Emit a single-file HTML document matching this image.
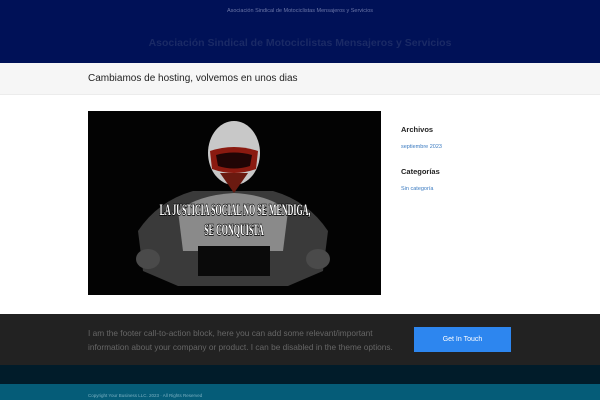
<!DOCTYPE html>
<html><head><meta charset="utf-8"><style>
*{margin:0;padding:0;box-sizing:border-box}
body{width:600px;height:400px;overflow:hidden;font-family:"Liberation Sans",sans-serif;background:#fff;position:relative}
.hdr{position:absolute;top:0;left:0;width:600px;height:63px;background:#001157}
.tag{position:absolute;top:8px;width:100%;text-align:center;font-size:5.5px;color:#6a76a8}
.site{position:absolute;top:37px;width:100%;text-align:center;font-size:10.5px;font-weight:bold;color:#1a2a66}
.tb{position:absolute;top:63px;left:0;width:600px;height:32px;background:#f6f6f6;border-bottom:1px solid #ececec}
.tb h1{position:absolute;left:88px;top:10px;font-size:10px;font-weight:normal;color:#222}
.img{position:absolute;left:88px;top:111px;width:293px;height:184px;background:#000}
.side{position:absolute;left:401px;top:125px}
.side h3{font-size:7.5px;color:#222;font-weight:bold;height:19px}
.side a{display:block;font-size:5.5px;color:#3a7ac0;height:23px}
.cta{position:absolute;top:314px;left:0;width:600px;height:51px;background:#222}
.cta p{position:absolute;left:88px;top:12px;width:312px;font-size:8.3px;line-height:14px;color:#666;white-space:nowrap}
.btn{position:absolute;left:414px;top:13px;width:97px;height:25px;background:#2d86ef;color:#fff;font-size:7px;text-align:center;line-height:25px}
.dk{position:absolute;top:365px;left:0;width:600px;height:19px;background:#011c2a}
.bt{position:absolute;top:384px;left:0;width:600px;height:16px;background:#055c78}
.bt span{position:absolute;left:88px;top:9px;font-size:4.5px;color:#7ab0c2}
</style></head><body>
<div class="hdr"><div class="tag">Asociación Sindical de Motociclistas Mensajeros y Servicios</div><div class="site">Asociación Sindical de Motociclistas Mensajeros y Servicios</div></div>
<div class="tb"><h1>Cambiamos de hosting, volvemos en unos dias</h1></div>
<div class="img"><svg width="293" height="184" viewBox="0 0 293 184">
<rect width="293" height="184" fill="#030303"/>
<path d="M50 120 Q70 90 105 80 L185 80 Q220 90 240 120 L235 160 L200 175 L90 175 L55 160Z" fill="#3a3a3a"/>
<path d="M90 100 Q110 84 146 82 Q182 84 200 100 L195 140 L95 140Z" fill="#8a8a8a"/>
<ellipse cx="146" cy="42" rx="26" ry="32" fill="#c8c8c8"/>
<path d="M122 40 Q146 32 170 40 L168 58 Q146 66 124 58Z" fill="#8a1a10"/>
<path d="M128 44 Q146 39 164 44 L162 55 Q146 60 130 55Z" fill="#200505"/>
<path d="M132 62 L146 82 L160 62 Z" fill="#6a1a10"/>
<rect x="110" y="135" width="72" height="30" fill="#0a0a0a"/>
<ellipse cx="60" cy="148" rx="12" ry="10" fill="#4a4a4a"/>
<ellipse cx="230" cy="148" rx="12" ry="10" fill="#4a4a4a"/>
<g font-family="Liberation Serif,serif" font-weight="bold" fill="#fff" stroke="#000" stroke-width="1.5" paint-order="stroke" text-anchor="middle">
<text transform="translate(147,104) scale(0.5,1)" font-size="16">LA JUSTICIA SOCIAL NO SE MENDIGA,</text>
<text transform="translate(146,124) scale(0.5,1)" font-size="16">SE CONQUISTA</text></g>
</svg></div>
<div class="side"><h3>Archivos</h3><a>septiembre 2023</a><h3>Categorías</h3><a>Sin categoría</a></div>
<div class="cta"><p>I am the footer call-to-action block, here you can add some relevant/important<br>information about your company or product. I can be disabled in the theme options.</p><div class="btn">Get In Touch</div></div>
<div class="dk"></div>
<div class="bt"><span>Copyright Your Business LLC. 2023 · All Rights Reserved</span></div>
</body></html>
